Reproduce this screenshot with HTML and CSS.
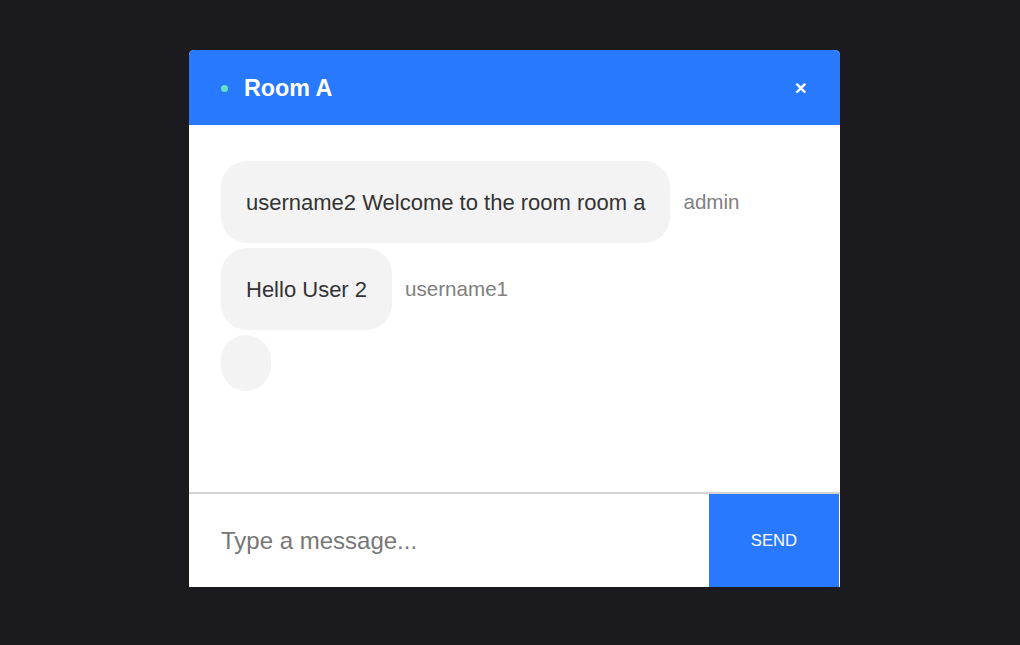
FILE: index.html
```html
<!DOCTYPE html>
<html>
<head>
<meta charset="utf-8">
<link rel="stylesheet" href="styles.css">
</head>
<body>
<div class="page">
  <div class="chat">
    <div class="header">
      <div class="title"><span class="dot"></span><span class="room">Room A</span></div>
      <span class="close">&#x2715;</span>
    </div>
    <div class="messages">
      <div class="msg"><div class="bubble">username2 Welcome to the room room a</div><span class="meta">admin</span></div>
      <div class="msg"><div class="bubble">Hello User 2</div><span class="meta">username1</span></div>
      <div class="msg"><div class="bubble empty"></div></div>
    </div>
    <div class="composer">
      <input class="input" type="text" placeholder="Type a message...">
      <button class="send">SEND</button>
    </div>
  </div>
</div>
</body>
</html>
```
FILE: styles.css
```css
html, body { margin: 0; padding: 0; }
body {
  background: #1b1b1f;
  font-family: "Liberation Sans", Arial, sans-serif;
  width: 1020px;
  height: 645px;
  overflow: hidden;
}
.page {
  display: flex;
  padding-top: 50px;
  padding-left: 189px;
}
.chat {
  width: 651px;
  background: #fff;
  border-radius: 5px 5px 0 0;
  overflow: hidden;
  display: flex;
  flex-direction: column;
}
.header {
  height: 75px;
  box-sizing: border-box;
  padding: 2px 32px 0;
  background: #2979ff;
  display: flex;
  align-items: center;
  justify-content: space-between;
}
.title { display: flex; align-items: center; }
.dot {
  width: 7px; height: 7px; border-radius: 50%;
  background: #5fe3c0;
  margin-right: 16px;
}
.room { color: #fff; font-weight: bold; font-size: 23.3px; }
.close { color: #fff; font-size: 16px; font-weight: bold; margin-right: 1px; }
.messages {
  height: 331px;
  padding: 36px 32px 0;
  display: flex;
  flex-direction: column;
  gap: 5px;
}
.msg { display: flex; align-items: center; }
.bubble {
  background: #f3f3f3;
  border-radius: 26px;
  padding: 29px 25px 27px;
  font-size: 22px;
  line-height: 26px;
  color: #333;
}
.bubble.empty { padding: 28px 25px; }
.meta { margin-left: 13px; font-size: 20.6px; color: #808080; }
.composer {
  border-top: 2px solid #d3d3d3;
  display: flex;
  height: 93px;
}
.input {
  flex: 1;
  border: none;
  outline: none;
  padding: 0 32px;
  font-family: "Liberation Sans", Arial, sans-serif;
  font-size: 24px;
  color: #333;
  background: #fff;
}
.input::placeholder { color: #777; }
.send {
  width: 130px;
  margin-right: 1px;
  border: none;
  background: #2979ff;
  color: #fff;
  font-family: "Liberation Sans", Arial, sans-serif;
  font-size: 16.7px;
}
```
